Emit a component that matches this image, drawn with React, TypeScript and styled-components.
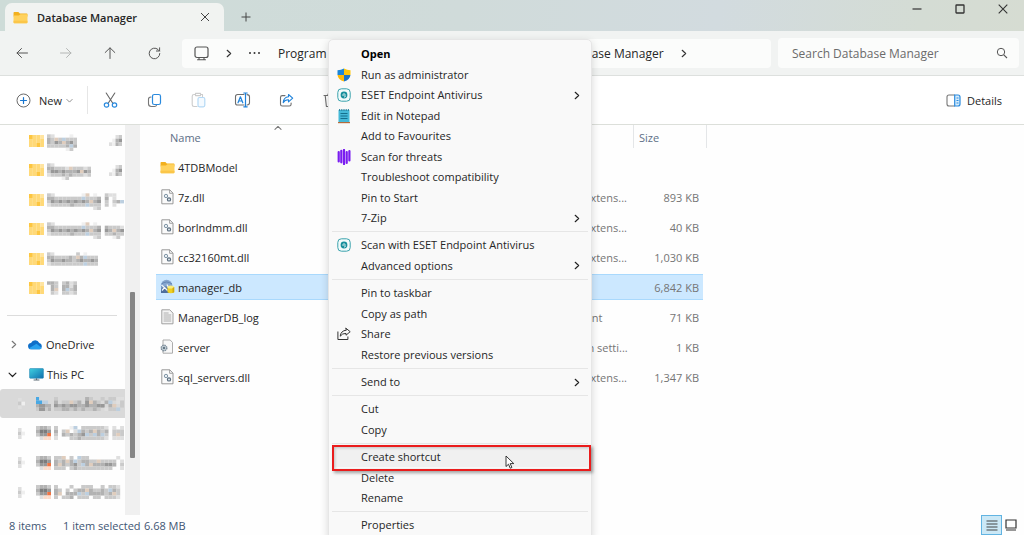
import React from "react";
import styled, { createGlobalStyle } from "styled-components";

const GlobalStyle = createGlobalStyle`
  * { box-sizing: border-box; }
  body { margin: 0; background: #fff; font-family: "Open Sans", "Noto Sans", sans-serif; font-size: 11px; color: #262626; }
  button, input { font: inherit; color: inherit; }
  svg { display: block; flex: none; }
`;

const Window = styled.div`
  position: relative;
  display: flex;
  flex-direction: column;
  height: 100vh;
  overflow: hidden;
  background: #fefefe;
`;

const PlainButton = styled.button`
  display: flex;
  align-items: center;
  justify-content: center;
  padding: 0;
  border: 0;
  background: none;
`;

/* Title bar */
const TitleBar = styled.header`
  display: flex;
  height: 31px;
  flex: none;
  padding: 3px 0 0 5px;
  background: linear-gradient(100deg, #cedcd8 0%, #d0dbda 45%, #d2dbdf 70%, #d4dcd4 90%, #d6dcd2 100%);
`;

const Tab = styled.div`
  display: flex;
  align-items: center;
  width: 219px;
  padding: 0 14px 0 8px;
  gap: 8px;
  border-radius: 7px 7px 0 0;
  background: #f1f3f1;
  font-weight: 600;
`;

const TabTitle = styled.span`
  flex: 1;
  padding-left: 1px;
`;

const NewTab = styled(PlainButton)`
  width: 44px;
`;

const Caption = styled.div`
  display: flex;
  margin-left: auto;
  height: 11px;
`;

const CaptionButton = styled(PlainButton)`
  width: 43px;
`;

/* Navigation bar */
const NavBar = styled.nav`
  display: flex;
  flex: none;
  align-items: center;
  height: 45px;
  padding: 0 5px 0 0;
  border-bottom: 1px solid #dde0de;
  background: #f1f3f2;
`;

const NavButton = styled(PlainButton)`
  width: 44px;
  height: 30px;
`;

const Address = styled.div`
  display: flex;
  flex: 1;
  align-items: center;
  height: 29px;
  margin: 0 7px 0 6px;
  padding-left: 12px;
  border-radius: 4px;
  background: #fbfcfb;
  font-size: 12px;
`;

const Crumb = styled(PlainButton)<{ $width?: number }>`
  justify-content: flex-start;
  width: ${(p) => (p.$width ? p.$width + "px" : "auto")};
  white-space: nowrap;
`;

const CrumbArrow = styled.span`
  display: flex;
  justify-content: center;
  width: 39px;
`;

const SearchBox = styled.label`
  display: flex;
  align-items: center;
  width: 241px;
  height: 30px;
  padding: 0 11px 0 14px;
  border-radius: 4px;
  background: #fbfcfb;
`;

const SearchInput = styled.input`
  flex: 1;
  min-width: 0;
  padding: 0;
  border: 0;
  outline: 0;
  background: none;
  font-size: 12px;
  &::placeholder { color: #6b6b6b; opacity: 1; }
`;

/* Command bar */
const CommandBar = styled.div`
  display: flex;
  flex: none;
  align-items: center;
  height: 49px;
  padding: 0 22px 0 16px;
  border-bottom: 1px solid #dcdfda;
  background: #fff;
`;

const NewButton = styled(PlainButton)`
  gap: 8px;
  width: 60px;
  justify-content: flex-start;
`;

const NewLabel = styled.span`
  margin-right: -4px;
`;

const Rule = styled.span`
  width: 1px;
  height: 28px;
  margin-left: 11px;
  background: #e6e6e6;
`;

const CommandButton = styled(PlainButton)`
  width: 44px;
  height: 30px;
`;

const DetailsButton = styled(PlainButton)`
  margin-left: auto;
  gap: 6px;
`;

/* Body */
const Body = styled.div`
  display: flex;
  flex: 1;
  min-height: 0;
`;

const Sidebar = styled.aside`
  width: 125px;
  flex: none;
  padding-top: 1px;
  overflow: hidden;
`;

const TreeGroup = styled.ul`
  margin: 0;
  padding: 0;
  list-style: none;
`;

const TreeItem = styled.li<{ $active?: boolean }>`
  display: flex;
  align-items: center;
  height: 29px;
  border-radius: 3px 0 0 3px;
  background: ${(p) => (p.$active ? "#d9d9d9" : "none")};
  &:nth-child(even) { height: 30px; }
`;

const Toggle = styled.span<{ $width: number; $indent?: number }>`
  display: flex;
  flex: none;
  width: ${(p) => p.$width}px;
  padding-left: ${(p) => p.$indent ?? 9}px;
`;

const PinSlot = styled.span`
  margin-left: auto;
  padding-right: 3px;
`;

const TreeLabel = styled.span`
  padding-left: 3px;
  white-space: nowrap;
`;

const TreeRule = styled.hr`
  height: 1px;
  margin: 12px 8px 14px 7px;
  border: 0;
  background: #dcdcdc;
`;

const ScrollTrack = styled.div`
  width: 15px;
  flex: none;
  padding: 167px 5px 0;
  background: #f0f0f0;
`;

const ScrollThumb = styled.div`
  height: 166px;
  border-radius: 1px;
  background: #868686;
`;

const Files = styled.main`
  flex: 1;
  padding-left: 16px;
  min-width: 0;
  overflow: hidden;
`;

const Table = styled.table`
  width: 551px;
  table-layout: fixed;
  border-collapse: separate;
  border-spacing: 0;
`;

const HeadCell = styled.th<{ $line?: boolean; $width?: number; $indent?: number }>`
  position: relative;
  width: ${(p) => p.$width}px;
  height: 27px;
  padding: 0 0 2px ${(p) => p.$indent ?? 0}px;
  color: #5d6f86;
  font-weight: 400;
  text-align: left;
  background: ${(p) => (p.$line ? "linear-gradient(#e4e6e8, #e4e6e8) no-repeat 0 0 / 1px 23px" : "none")};
`;

const SortMark = styled.span`
  position: absolute;
  top: -1px;
  left: 118px;
`;

const Row = styled.tr<{ $selected?: boolean }>`
  td {
    background: ${(p) => (p.$selected ? "#cce8ff" : "none")};
    background-clip: padding-box;
    box-shadow: ${(p) => (p.$selected ? "inset 0 1px #a9d9fd, inset 0 -1px #a9d9fd" : "none")};
  }
`;

const Cell = styled.td<{ $right?: boolean }>`
  height: 30px;
  padding: 0 ${(p) => (p.$right ? 4 : 7)}px 0 0;
  border: solid transparent;
  border-width: 2px 0;
  color: #757575;
  text-align: ${(p) => (p.$right ? "right" : "left")};
  white-space: nowrap;
  overflow: hidden;
`;

const FileName = styled.span`
  display: flex;
  align-items: center;
  gap: 3px;
  padding-left: 4px;
  color: #262626;
`;

/* Status bar */
const StatusBar = styled.footer`
  display: flex;
  flex: none;
  align-items: center;
  height: 20px;
  padding: 0 4px 0 9px;
  color: #3f5573;
`;

const StatusText = styled.span<{ $width?: number }>`
  width: ${(p) => (p.$width ? p.$width + "px" : "auto")};
`;

const ViewButton = styled(PlainButton)<{ $on?: boolean }>`
  width: ${(p) => (p.$on ? 21 : 18)}px;
  height: 20px;
  border: ${(p) => (p.$on ? "1px solid #62b4e2" : "0")};
  background: ${(p) => (p.$on ? "#cbe8f6" : "none")};
`;

const ViewSwitch = styled.div`
  display: flex;
  margin-left: auto;
`;

/* Context menu */
const Menu = styled.div`
  position: absolute;
  top: 39px;
  left: 328px;
  width: 264px;
  padding: 4px 3px;
  border: 1px solid #e6e6e6;
  border-radius: 5px;
  background: #f9f9f9;
  box-shadow: 0 3px 8px rgba(0, 0, 0, 0.16);
`;

const MenuGroup = styled.div`
  & + & {
    margin-top: 3px;
    padding-top: 3px;
    border-top: 1px solid #e6e6e6;
  }
`;

const MenuItem = styled.button<{ $bold?: boolean; $hover?: boolean }>`
  position: relative;
  display: flex;
  align-items: center;
  width: 100%;
  height: 20px;
  padding: 0 7px 0 5px;
  border: 0;
  border-radius: 2px;
  background: ${(p) => (p.$hover ? "#f0f0f0" : "none")};
  color: ${(p) => (p.$bold ? "#000" : "#262626")};
  font-weight: ${(p) => (p.$bold ? 700 : 400)};
  text-align: left;
  &:nth-child(even) { height: 21px; }
`;

const MenuIcon = styled.span`
  display: flex;
  width: 24px;
  flex: none;
`;

const MenuLabel = styled.span`
  flex: 1;
  padding-bottom: 1px;
`;

const Highlight = styled.span`
  position: absolute;
  inset: -2px -3px -4px 0;
  border: 2px solid #ea1c1c;
  box-shadow: 2px 2px 3px rgba(0, 0, 0, 0.35), inset 1px 1px 3px rgba(0, 0, 0, 0.2);
`;

const Pointer = styled.span`
  position: absolute;
  top: 8px;
  left: 173px;
`;

/* Icons */
const line = { fill: "none", strokeLinecap: "round" as const, strokeLinejoin: "round" as const };

const Chevron = ({ dir = "right", color = "#333", size = 8 }: { dir?: string; color?: string; size?: number }) => {
  const d = { right: "M3 1l3.2 3L3 7", down: "M1 2.7l3.2 3.2 3.2-3.2", up: "M1 5.4l3.2-3 3.2 3" }[dir];
  return (
    <svg width={size} height={size} viewBox="0 0 8.4 8">
      <path d={d} {...line} stroke={color} strokeWidth="1.1" />
    </svg>
  );
};

const FolderIcon = ({ width = 14 }: { width?: number }) => (
  <svg width={width} height={width - 2} viewBox="0 0 14 12">
    <path d="M.5 1.6Q.5.8 1.3.8H5l1.4 1.5h6.4q.7 0 .7.7v2H.5z" fill="#f2b01e" />
    <path d="M.5 4.2h5L7 2.9h6q.5 0 .5.6v7q0 .8-.8.8H1.3q-.8 0-.8-.8z" fill="#ffd25e" />
    <path d="M.5 9h13v1.5q0 .8-.8.8H1.3q-.8 0-.8-.8z" fill="#fbc649" />
  </svg>
);

const DllIcon = () => (
  <svg width="15" height="16" viewBox="0 0 15 16">
    <path d="M1.8.8h8l3.2 3.4v10.6H1.8z" fill="#fafafa" stroke="#8e8e8e" strokeWidth=".9" />
    <path d="M9.6.9v3.4h3.3" fill="none" stroke="#8e8e8e" strokeWidth=".8" />
    <circle cx="6" cy="7" r="1.7" fill="#e9eff3" stroke="#8296a6" strokeWidth="1" />
    <circle cx="9" cy="10.4" r="1.6" fill="#dde5ea" stroke="#5c6f80" strokeWidth="1.2" />
  </svg>
);

const TextFileIcon = () => (
  <svg width="15" height="16" viewBox="0 0 15 16">
    <path d="M1.8.8h8l3.2 3.4v10.6H1.8z" fill="#f4f4f4" stroke="#979797" strokeWidth=".9" />
    <path d="M3.6 4h5M3.6 6h7.6M3.6 8h7.6M3.6 10h7.6M3.6 12h7.6" stroke="#a5a5a5" strokeWidth=".9" />
  </svg>
);

const ConfigIcon = () => (
  <svg width="15" height="16" viewBox="0 0 15 16">
    <path d="M3 1h7.2l2.3 2.5v10.7H3z" fill="#f8f8f8" stroke="#a4a4a4" strokeWidth=".9" />
    <circle cx="4" cy="9" r="2.8" fill="#c3ced6" stroke="#7d8d9a" strokeWidth="1.4" strokeDasharray="1.5 .7" />
    <circle cx="4" cy="9" r="1.1" fill="#4f6474" />
  </svg>
);

const ManagerIcon = () => (
  <svg width="15" height="16" viewBox="0 0 15 16">
    <circle cx="6.6" cy="6.6" r="5.8" fill="#86a6cf" />
    <path d="M1.5 5q5-4 10.500 0M1 8h11" stroke="#5a7cab" fill="none" strokeWidth=".8" />
    <path d="M1 14V9.500l4-2 4 2V14z" fill="#4e6e9d" />
    <path d="M1.500 6l3 2.500L2 11.500M7 5.500l1.500 3M4.500 8.500l3 3" stroke="#eef3f8" strokeWidth="1.300" fill="none" />
    <path d="M7.500 8v5.300q3.300 2 6.700 0V8z" fill="#efd022" />
    <ellipse cx="10.800" cy="8" rx="3.400" ry="1.600" fill="#f9ec82" />
    <path d="M12.500 9v5l1.700-.8V8z" fill="#d0a90c" />
  </svg>
);

const ShieldIcon = () => (
  <svg width="14" height="14" viewBox="0 0 14 14">
    <path d="M7 .5Q4 2.200.5 2.200V7H7z" fill="#1c86d8" />
    <path d="M7 .5q3 1.700 6.500 1.700V7H7z" fill="#fdc60b" />
    <path d="M.5 7Q1 11.500 7 13.600V7z" fill="#fdb90b" />
    <path d="M13.500 7Q13 11.500 7 13.600V7z" fill="#1b74c8" />
  </svg>
);

const EsetIcon = () => (
  <svg width="14" height="14" viewBox="0 0 14 14">
    <rect x=".8" y=".8" width="12.400" height="12.400" rx="3.600" fill="#f2fbfb" stroke="#3ba3ad" strokeWidth="1" />
    <circle cx="7" cy="7" r="3.400" fill="#168f9c" />
    <path d="M5.200 7h3.600M8.700 8.300Q8 9 7 9" stroke="#fff" strokeWidth=".9" fill="none" />
    <path d="M6 6Q7 5 8 6" stroke="#e2f5f6" strokeWidth=".6" fill="none" />
  </svg>
);

const NotepadIcon = () => (
  <svg width="14" height="16" viewBox="0 0 14 16">
    <rect x="1.500" y="2" width="11" height="12.500" rx=".6" fill="#45b9d8" />
    <path d="M2.500 1v2M4.300 1v2M6.100 1v2M7.900 1v2M9.700 1v2M11.500 1v2" stroke="#26809c" strokeWidth=".9" />
    <path d="M3.500 5.500h7M3.500 8h7M3.500 10.500h7" stroke="#15708d" strokeWidth="1.100" />
    <path d="M1 14.600h12" stroke="#b66b3c" strokeWidth="1.200" />
  </svg>
);

const ThreatIcon = () => (
  <svg width="14" height="16" viewBox="0 0 14 16">
    <path d="M1.700 3v9.500M4.300 1.800v11.500M7 1v14M9.700 3v11M12.400 2v9.500" stroke="#7a1cf0" strokeWidth="2.200" strokeLinecap="round" />
  </svg>
);

const ShareIcon = ({ frame, arrow }: { frame: string; arrow: string }) => (
  <svg width="15" height="15" viewBox="0 0 15 15">
    <path d="M6 2.600H3.300Q1.500 2.600 1.500 4.400v6.800q0 1.800 1.800 1.800h7q1.800 0 1.800-1.800V10" {...line} stroke={frame} strokeWidth="1.100" />
    <path d="M9.500 1.500l4.200 3.700-4.200 3.700V6.800Q6 6.600 4.200 9.600 4.600 4.200 9.500 3.700z" {...line} stroke={arrow} strokeWidth="1.100" />
  </svg>
);

const MenuShareIcon = () => (
  <svg width="14" height="14" viewBox="0 0 14 14">
    <path d="M.9 4.500v8h10V9.500" fill="none" stroke="#333" strokeWidth="1" />
    <path d="M9 1.300l4.200 3.400L9 8.200V6.400Q5.300 6.200 3.200 9.200 3.800 3.700 9 3.200z" {...line} stroke="#333" strokeWidth="1" />
  </svg>
);

const CloudIcon = () => (
  <svg width="15" height="11" viewBox="0 0 15 11">
    <path d="M3.600 10.300A3.200 3.200 0 0 1 3 3.900 4.600 4.600 0 0 1 11.300 4 3.300 3.300 0 0 1 11.700 10.300z" fill="#0f6fc9" />
    <path d="M1 9.200L8.500 4.700l5.300 4.200q-.6 1.400-2.100 1.400H3.600Q2 10.300 1 9.200z" fill="#28a0ee" />
  </svg>
);

const PcIcon = () => (
  <svg width="15" height="13" viewBox="0 0 15 13">
    <defs>
      <linearGradient id="pc" x1="0" y1="0" x2="1" y2="1">
        <stop offset="0" stopColor="#3fd0e0" />
        <stop offset="1" stopColor="#0f6fae" />
      </linearGradient>
    </defs>
    <rect x=".6" y=".6" width="13.800" height="9.600" rx=".6" fill="url(#pc)" stroke="#2386b4" strokeWidth=".6" />
    <path d="M7.500 10.200v1.500M4.600 12h5.800" stroke="#5d6b75" strokeWidth="1.200" />
  </svg>
);

/* Censored labels: each character is one tile of the mosaic. */
const tiles: Record<string, string> = {
  "1": "#efefef", "2": "#dfdfdf", "3": "#cacaca", "4": "#b2b2b2", "5": "#989898", "6": "#7c7c7c",
  w: "#e0cdbd", b: "#bccfe0", p: "#fbdccb", o: "#ef7444", s: "#48a8e4",
  y: "#ffd978", z: "#fdc640", x: "#ffe4a0",
};

const Mosaic = ({ rows, width, height }: { rows: string[]; width: number; height: number }) => (
  <svg width={width} height={height} viewBox={`0 0 ${rows[0].length} ${rows.length}`} preserveAspectRatio="none">
    {rows.flatMap((row, y) =>
      [...row].map((c, x) =>
        tiles[c] ? <rect key={`${x}-${y}`} x={x} y={y} width="1.02" height="1.02" fill={tiles[c]} /> : null
      )
    )}
  </svg>
);

const folderTiles = ["zyyx", "yyyy", "yyzy"];
const pinTiles = ["..23", ".145", "2143"];
const driveTiles = ["3443", "4665", "355o", ".2pp"];

const pinned = [
  { rows: ["........", "32....1.", "43w3b333", "4354w453", "333334b4", ".....13."], width: 30, pin: true },
  { rows: ["............", "32..........", "443332w33323", "355454445w54", "233343433323", "....13......"], width: 44, pin: true },
  { rows: ["....................", "32.......1w.1..322..", "443333333b3334.4.2..", "35454545454w45.3.34b", "2333334333b333.3.2..", "............23......"], width: 77 },
  { rows: ["....................", "32.......1w.1.......", "443333333b3334.43332", "35454545454w45.54w45", "2333334333b333.33433", "............23...13."], width: 77 },
  { rows: ["..............", "32......3.1...", "44333343w4b333", "35445443454454", "2333333333b333", ".............."], width: 51 },
  { rows: ["........", "443.3423", ".43.4424", ".4w.4b34", ".32.3323", "........"], width: 30 },
];

const drives = [
  { tile: ["s....", "ssbb.", "45544", "35534"], rows: ["3.......43..3.3322", "4.33w34.5w43.4b.23", "5454554454455.4w.3", "334434343343.233b."], active: true },
  { tile: driveTiles, rows: ["3...1b.3333332.2.2", "4.3w.2b434w434.333", "3.434345b3b4b3.3w3", "2...3343333332.222"] },
  { tile: driveTiles, rows: ["33w.3.b33.......2.", "434w4b34433w3333.2", "4w43453b4w444554.3", "333.34333333333..2"] },
  { tile: driveTiles, rows: ["3...3..333..3.332.", "43.3.344w43343b43.", "4w.444b3b444434w3.", "3.334.333.33.3332."] },
];

const files = [
  { name: "4TDBModel", icon: <FolderIcon width={15} />, type: "", size: "" },
  { name: "7z.dll", icon: <DllIcon />, type: "Application extens...", size: "893 KB" },
  { name: "borlndmm.dll", icon: <DllIcon />, type: "Application extens...", size: "40 KB" },
  { name: "cc32160mt.dll", icon: <DllIcon />, type: "Application extens...", size: "1,030 KB" },
  { name: "manager_db", icon: <ManagerIcon />, type: "", size: "6,842 KB", selected: true },
  { name: "ManagerDB_log", icon: <TextFileIcon />, type: "Text Document", size: "71 KB" },
  { name: "server", icon: <ConfigIcon />, type: "Configuration setti...", size: "1 KB" },
  { name: "sql_servers.dll", icon: <DllIcon />, type: "Application extens...", size: "1,347 KB" },
];

type Entry = { label: string; icon?: React.ReactNode; more?: boolean; bold?: boolean; marked?: boolean };

const menu: Entry[][] = [
  [
    { label: "Open", bold: true },
    { label: "Run as administrator", icon: <ShieldIcon /> },
    { label: "ESET Endpoint Antivirus", icon: <EsetIcon />, more: true },
    { label: "Edit in Notepad", icon: <NotepadIcon /> },
    { label: "Add to Favourites" },
    { label: "Scan for threats", icon: <ThreatIcon /> },
    { label: "Troubleshoot compatibility" },
    { label: "Pin to Start" },
    { label: "7-Zip", more: true },
  ],
  [{ label: "Scan with ESET Endpoint Antivirus", icon: <EsetIcon /> }, { label: "Advanced options", more: true }],
  [
    { label: "Pin to taskbar" },
    { label: "Copy as path" },
    { label: "Share", icon: <MenuShareIcon /> },
    { label: "Restore previous versions" },
  ],
  [{ label: "Send to", more: true }],
  [{ label: "Cut" }, { label: "Copy" }],
  [{ label: "Create shortcut", marked: true }, { label: "Delete" }, { label: "Rename" }],
  [{ label: "Properties" }],
];

export default function App() {
  return (
    <Window>
      <GlobalStyle />
      <TitleBar>
        <Tab>
          <FolderIcon width={15} />
          <TabTitle>Database Manager</TabTitle>
          <PlainButton aria-label="Close tab">
            <svg width="10" height="10" viewBox="0 0 10 10">
              <path d="M1 1l8 8M9 1L1 9" stroke="#444" strokeWidth="1" />
            </svg>
          </PlainButton>
        </Tab>
        <NewTab aria-label="New tab">
          <svg width="10" height="10" viewBox="0 0 10 10">
            <path d="M5 .5v9M.5 5h9" stroke="#444" strokeWidth="1" />
          </svg>
        </NewTab>
        <Caption>
          <CaptionButton aria-label="Minimize">
            <svg width="10" height="10" viewBox="0 0 10 10"><path d="M.5 5h9" stroke="#333" strokeWidth="1.200" /></svg>
          </CaptionButton>
          <CaptionButton aria-label="Maximize">
            <svg width="10" height="10" viewBox="0 0 10 10"><rect x="1" y="1" width="8" height="8" rx=".5" fill="none" stroke="#333" strokeWidth="1.300" /></svg>
          </CaptionButton>
          <CaptionButton aria-label="Close">
            <svg width="10" height="10" viewBox="0 0 10 10"><path d="M.7.7l8.600 8.600M9.300.7L.7 9.300" stroke="#333" strokeWidth="1.100" /></svg>
          </CaptionButton>
        </Caption>
      </TitleBar>

      <NavBar>
        <NavButton aria-label="Back">
          <svg width="12" height="12" viewBox="0 0 12 12"><path d="M5.500 1.500L1 6l4.500 4.500M1 6h10.500" {...line} stroke="#555" strokeWidth="1" /></svg>
        </NavButton>
        <NavButton aria-label="Forward">
          <svg width="12" height="12" viewBox="0 0 12 12"><path d="M6.500 1.500L11 6l-4.500 4.500M11 6H.5" {...line} stroke="#b4b6b5" strokeWidth="1" /></svg>
        </NavButton>
        <NavButton aria-label="Up">
          <svg width="12" height="12" viewBox="0 0 12 12"><path d="M1.200 5.500L6 .8l4.800 4.700M6 1v10.500" {...line} stroke="#555" strokeWidth="1" /></svg>
        </NavButton>
        <NavButton aria-label="Refresh">
          <svg width="13" height="13" viewBox="0 0 13 13"><path d="M11.800 6.500a5.300 5.300 0 1 1-1.800-4L11.500 4M11.600.8V4H8.400" {...line} stroke="#555" strokeWidth="1" /></svg>
        </NavButton>
        <Address>
          <Crumb aria-label="Devices">
            <svg width="15" height="15" viewBox="0 0 15 15">
              <rect x="1" y="1" width="13" height="10.500" rx="2" fill="none" stroke="#555" strokeWidth="1.200" />
              <path d="M5 11.500v2M10 11.500v2M3.500 13.800h8" {...line} stroke="#555" strokeWidth="1.100" />
            </svg>
          </Crumb>
          <CrumbArrow><Chevron size={9} /></CrumbArrow>
          <Crumb $width={30} aria-label="More locations">
            <svg width="13" height="4" viewBox="0 0 13 4">
              <circle cx="2" cy="2" r="1" fill="#333" /><circle cx="6.500" cy="2" r="1" fill="#333" /><circle cx="11" cy="2" r="1" fill="#333" />
            </svg>
          </Crumb>
          <Crumb $width={280}>Program</Crumb>
          <Crumb>Database Manager</Crumb>
          <CrumbArrow><Chevron size={9} /></CrumbArrow>
        </Address>
        <SearchBox>
          <SearchInput type="text" placeholder="Search Database Manager" aria-label="Search Database Manager" />
          <svg width="12" height="12" viewBox="0 0 12 12">
            <circle cx="5" cy="5" r="3.700" fill="none" stroke="#555" strokeWidth="1" />
            <path d="M7.800 7.800l3.200 3.200" stroke="#555" strokeWidth="1.100" />
          </svg>
        </SearchBox>
      </NavBar>

      <CommandBar>
        <NewButton>
          <svg width="15" height="15" viewBox="0 0 15 15">
            <circle cx="7.500" cy="7.500" r="6.500" fill="none" stroke="#6a6a6a" strokeWidth="1" />
            <path d="M7.500 4.500v6M4.500 7.500h6" stroke="#1976cf" strokeWidth="1.200" strokeLinecap="round" />
          </svg>
          <NewLabel>New</NewLabel>
          <Chevron dir="down" color="#888" size={7} />
        </NewButton>
        <Rule />
        <CommandButton aria-label="Cut">
          <svg width="15" height="17" viewBox="0 0 15 17">
            <path d="M3.200 1l6.600 10.300M11.800 1L5.200 11.300" {...line} stroke="#666" strokeWidth="1.100" />
            <circle cx="3.500" cy="13" r="2.200" fill="none" stroke="#2a8ade" strokeWidth="1.200" />
            <circle cx="11.500" cy="13" r="2.200" fill="none" stroke="#2a8ade" strokeWidth="1.200" />
          </svg>
        </CommandButton>
        <CommandButton aria-label="Copy">
          <svg width="15" height="15" viewBox="0 0 15 15">
            <path d="M4 4Q1.500 4 1.500 6.200v4.600Q1.500 13.500 4.300 13.500h3.200Q9.300 13.500 9.600 12" {...line} stroke="#777" strokeWidth="1.100" />
            <rect x="5.500" y="1.500" width="8" height="10" rx="1.800" fill="none" stroke="#2a8ade" strokeWidth="1.200" />
          </svg>
        </CommandButton>
        <CommandButton aria-label="Paste">
          <svg width="15" height="16" viewBox="0 0 15 16">
            <path d="M4.500 2.500H3Q1.200 2.500 1.200 4.200v8.600q0 1.700 1.800 1.700h3M9.500 2.500h2v2M4.500 1.400h5v2.200h-5z" {...line} stroke="#ccc" strokeWidth="1.100" />
            <rect x="7" y="5.500" width="6.800" height="9.300" rx="1.500" fill="#f4faff" stroke="#b5d9f5" strokeWidth="1.200" />
          </svg>
        </CommandButton>
        <CommandButton aria-label="Rename">
          <svg width="17" height="16" viewBox="0 0 17 16">
            <path d="M10 2.500H3.600Q1.500 2.500 1.500 4.600v6.300Q1.500 13 3.600 13H10M13 2.600q2.500 0 2.500 2.200v6q0 2.200-2.500 2.200" {...line} stroke="#6e6e6e" strokeWidth="1.100" />
            <path d="M9.800 1h3.400M9.800 14.800h3.400M11.500 1v13.800M4 10.800l2.400-6 2.400 6M4.800 9h3.200" {...line} stroke="#1f82da" strokeWidth="1.200" />
          </svg>
        </CommandButton>
        <CommandButton aria-label="Share">
          <ShareIcon frame="#6e6e6e" arrow="#1f82da" />
        </CommandButton>
        <CommandButton aria-label="Delete">
          <svg width="14" height="15" viewBox="0 0 14 15">
            <path d="M1 2.500h12M2.200 2.500l1.200 11h7.200l1.200-11M5 2.500V1h4v1.500" {...line} stroke="#6e6e6e" strokeWidth="1.100" />
          </svg>
        </CommandButton>
        <DetailsButton>
          <svg width="15" height="13" viewBox="0 0 15 13">
            <path d="M8.500 1H3Q1 1 1 3v7q0 2 2 2h5.500" {...line} stroke="#777" strokeWidth="1.100" />
            <path d="M8.700 1H12q2 0 2 2v7q0 2-2 2H8.700z" fill="#d6ecfb" stroke="#2a8ade" strokeWidth="1.200" />
            <path d="M10.500 4h2M10.500 6.500h2M10.500 9h2" stroke="#2a8ade" strokeWidth="1" />
          </svg>
          Details
        </DetailsButton>
      </CommandBar>

      <Body>
        <Sidebar>
          <TreeGroup>
            {pinned.map((p, i) => (
              <TreeItem key={i}>
                <Toggle $width={29} />
                <Mosaic rows={folderTiles} width={15} height={12} />
                <TreeLabel><Mosaic rows={p.rows} width={p.width} height={20} /></TreeLabel>
                {p.pin && <PinSlot><Mosaic rows={pinTiles} width={13} height={11} /></PinSlot>}
              </TreeItem>
            ))}
          </TreeGroup>
          <TreeRule />
          <TreeGroup>
            <TreeItem>
              <Toggle $width={28}><Chevron color="#777" size={9} /></Toggle>
              <CloudIcon />
              <TreeLabel>OneDrive</TreeLabel>
            </TreeItem>
            <TreeItem>
              <Toggle $width={29} $indent={8}><Chevron dir="down" color="#222" size={9} /></Toggle>
              <PcIcon />
              <TreeLabel>This PC</TreeLabel>
            </TreeItem>
            {drives.map((d, i) => (
              <TreeItem key={i} $active={d.active}>
                <Toggle $width={36} $indent={18}><Mosaic rows={["2.", "31", "2."]} width={7} height={11} /></Toggle>
                <Mosaic rows={d.tile} width={15} height={14} />
                <TreeLabel><Mosaic rows={d.rows} width={70} height={14} /></TreeLabel>
              </TreeItem>
            ))}
          </TreeGroup>
        </Sidebar>
        <ScrollTrack><ScrollThumb /></ScrollTrack>
        <Files>
          <Table>
            <thead>
              <tr>
                <HeadCell $width={368} $indent={14}>
                  Name
                  <SortMark><Chevron dir="up" color="#777" size={8} /></SortMark>
                </HeadCell>
                <HeadCell $width={109} aria-label="Type" />
                <HeadCell $width={70} $indent={6} $line>Size</HeadCell>
                <HeadCell $width={3} aria-hidden />
                <HeadCell $width={1} $line aria-hidden />
              </tr>
            </thead>
            <tbody>
              {files.map((f) => (
                <Row key={f.name} $selected={f.selected}>
                  <Cell><FileName>{f.icon}{f.name}</FileName></Cell>
                  <Cell>{f.type}</Cell>
                  <Cell $right>{f.size}</Cell>
                </Row>
              ))}
            </tbody>
          </Table>
        </Files>
      </Body>

      <StatusBar>
        <StatusText $width={54}>8 items</StatusText>
        <StatusText $width={81}>1 item selected</StatusText>
        <StatusText>6.68 MB</StatusText>
        <ViewSwitch>
          <ViewButton $on aria-label="Details view">
            <svg width="12" height="12" viewBox="0 0 12 12"><path d="M.5 2h11M.5 5h11M.5 8h11M.5 11h11" stroke="#444" strokeWidth="1.200" /></svg>
          </ViewButton>
          <ViewButton aria-label="Large icons view">
            <svg width="12" height="12" viewBox="0 0 12 12"><path d="M1 1h10v8H1zM1 11h10" fill="none" stroke="#333" strokeWidth="1.200" /></svg>
          </ViewButton>
        </ViewSwitch>
      </StatusBar>

      <Menu>
        {menu.map((group, g) => (
          <MenuGroup key={g}>
            {group.map((m) => (
              <MenuItem key={m.label} $bold={m.bold} $hover={m.marked}>
                <MenuIcon>{m.icon}</MenuIcon>
                <MenuLabel>{m.label}</MenuLabel>
                {m.more && <Chevron color="#222" size={9} />}
                {m.marked && (
                  <>
                    <Highlight />
                    <Pointer>
                      <svg width="10" height="15" viewBox="0 0 10 15">
                        <path d="M1 1v10.500l2.500-2.300 1.700 4 1.700-.7-1.700-3.900h3.600z" fill="#fff" stroke="#222" strokeWidth=".9" />
                      </svg>
                    </Pointer>
                  </>
                )}
              </MenuItem>
            ))}
          </MenuGroup>
        ))}
      </Menu>
    </Window>
  );
}
